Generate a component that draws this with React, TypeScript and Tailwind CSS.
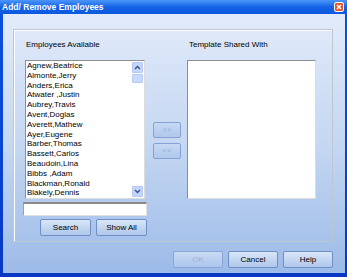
import React from "react";

const names = [
  "Agnew,Beatrice",
  "Almonte,Jerry",
  "Anders,Erica",
  "Atwater ,Justin",
  "Aubrey,Travis",
  "Avent,Doglas",
  "Averett,Mathew",
  "Ayer,Eugene",
  "Barber,Thomas",
  "Bassett,Carlos",
  "Beaudoin,Lina",
  "Bibbs ,Adam",
  "Blackman,Ronald",
  "Blakely,Dennis",
];

function Btn({ label, disabled, w }: { label: string; disabled?: boolean; w: string }) {
  return (
    <div
      className={`${w} h-[17px] flex items-center justify-center rounded-[2px] border text-[8px] ${
        disabled
          ? "border-[#8aa6d6] bg-gradient-to-b from-[#c9daf3] to-[#adc6ec] text-[#9fb2d3]"
          : "border-[#6f8fc4] bg-gradient-to-b from-[#d9e6f8] to-[#afc7eb] text-black"
      }`}
    >
      {label}
    </div>
  );
}

function Arrow({ up }: { up?: boolean }) {
  return (
    <div className="w-[11px] h-[11px] rounded-[1px] border border-[#b5c9f4] bg-[#c3d5fb] flex items-center justify-center">
      <svg width="7" height="5" viewBox="0 0 7 5">
        <path
          d={up ? "M1 4 L3.5 1.5 L6 4" : "M1 1 L3.5 3.5 L6 1"}
          fill="none"
          stroke="#3b5183"
          strokeWidth="1.4"
        />
      </svg>
    </div>
  );
}

export default function App() {
  return (
    <div
      className="w-[347px] h-[277px] flex flex-col bg-gradient-to-b from-[#0a52e0] to-[#0838c4] overflow-hidden"
      style={{ fontFamily: '"Liberation Sans", Arial, sans-serif' }}
    >
      {/* Barre de titre */}
      <div className="h-[14px] shrink-0 flex items-center justify-between pl-[2px] pr-[3px] bg-gradient-to-b from-[#4a96fa] via-[#1463e6] to-[#0a58de]">
        <span className="text-[8.5px] font-bold text-white leading-none">Add/ Remove Employees</span>
        <div className="w-[10px] h-[10px] rounded-[2px] border border-white bg-[#e2582f] flex items-center justify-center">
          <svg width="6" height="6" viewBox="0 0 6 6">
            <path d="M1 1 L5 5 M5 1 L1 5" stroke="white" strokeWidth="1.4" />
          </svg>
        </div>
      </div>

      {/* Corps */}
      <div className="flex-1 ml-[3px] mr-[2px] mb-[4px] flex flex-col bg-gradient-to-b from-[#e2ebfa] via-[#c5d7f2] to-[#9dbbe8]">
        {/* Groupe */}
        <div className="mt-[15px] ml-[10px] mr-[12px] h-[213px] border border-[#bdc7d2] shadow-[inset_1px_1px_0_#ffffff] flex pl-[9px] pt-[10px]">
          {/* Colonne gauche */}
          <div className="w-[124px] flex flex-col">
            <div className="h-[10px] leading-[10px] text-[8px] pl-[3px] text-black">Employees Available</div>
            <div className="mt-[10px] mx-[2px] h-[139px] bg-white border border-t-[#8e8e8e] border-l-[#8e8e8e] border-r-[#dcdcdc] border-b-[#dcdcdc] flex">
              <div className="flex-1 pl-[1px]">
                {names.map((n) => (
                  <div key={n} className="h-[9.8px] leading-[9.8px] text-[8px] text-black whitespace-nowrap">
                    {n}
                  </div>
                ))}
              </div>
              <div className="w-[11px] mr-[1px] mt-[1px] mb-[1px] flex flex-col">
                <Arrow up />
                <div className="mt-[1px] h-[9px] rounded-[1px] border border-[#b5c9f4] bg-[#c8d9fb]" />
                <div className="flex-1" />
                <Arrow />
              </div>
            </div>
            <div className="mt-[3px] h-[14px] bg-white border-t-2 border-t-[#8a8a8a] border-l border-l-[#a0a0a0] border-r border-r-[#e0e0e0] border-b border-b-[#e0e0e0]" />
            <div className="mt-[3px] flex justify-end gap-[5px]">
              <Btn label="Search" w="w-[51px]" />
              <Btn label="Show All" w="w-[51px]" />
            </div>
          </div>

          {/* Boutons centraux */}
          <div className="ml-[6px] w-[28px] pt-[82px] flex flex-col gap-[5px]">
            <div className="h-[16px] flex items-center justify-center rounded-[2px] border border-[#86a2d4] bg-gradient-to-b from-[#c6d8f3] to-[#b0c8ec] text-[7.5px] text-[#97acd2]">
              &gt;&gt;
            </div>
            <div className="h-[16px] flex items-center justify-center rounded-[2px] border border-[#86a2d4] bg-gradient-to-b from-[#c6d8f3] to-[#b0c8ec] text-[7.5px] text-[#97acd2]">
              &lt;&lt;
            </div>
          </div>

          {/* Colonne droite */}
          <div className="ml-[6px] w-[129px] flex flex-col">
            <div className="h-[10px] leading-[10px] text-[8px] pl-[2px] text-black">Template Shared With</div>
            <div className="mt-[10px] h-[139px] bg-white border border-t-[#8e8e8e] border-l-[#8e8e8e] border-r-[#dcdcdc] border-b-[#dcdcdc]" />
          </div>
        </div>

        {/* Boutons du bas */}
        <div className="mt-[9px] mr-[12px] flex justify-end gap-[5px]">
          <Btn label="OK" disabled w="w-[50px]" />
          <Btn label="Cancel" w="w-[50px]" />
          <Btn label="Help" w="w-[50px]" />
        </div>
      </div>
    </div>
  );
}
